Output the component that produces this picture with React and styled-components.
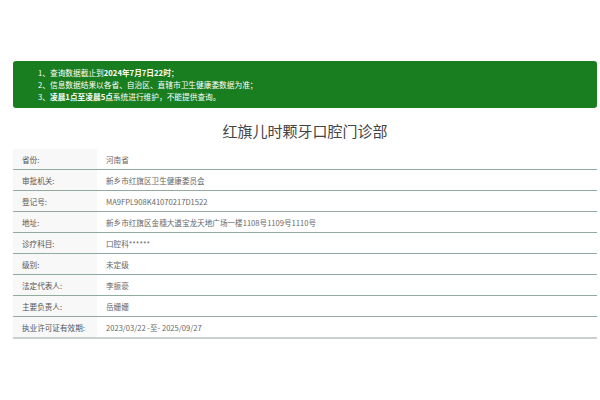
import React from "react";
import styled, { createGlobalStyle } from "styled-components";

const GlobalStyle = createGlobalStyle`
  html, body {
    margin: 0;
    padding: 0;
    background: #fff;
  }
  body {
    font-family: "Noto Sans CJK SC", "Noto Sans", sans-serif;
  }
`;

const Page = styled.div`
  width: 584px;
  padding: 61px 0 0 13px;
`;

const Notice = styled.ol`
  margin: 0;
  height: 47px;
  box-sizing: border-box;
  padding: 6px 0 0 25px;
  list-style: none;
  background: #187e1f;
  border-radius: 3px;
  color: #fff;
  font-size: 7.7px;
  line-height: 12px;
`;

const Title = styled.h2`
  margin: 13px 0 8px;
  text-align: center;
  font-size: 15px;
  line-height: 20px;
  font-weight: normal;
  color: #444;
`;

const Table = styled.div`
  display: flex;
  flex-direction: column;
  font-size: 7.6px;
`;

const Row = styled.div`
  display: grid;
  grid-template-columns: 84px 1fr;
  height: 20px;
  border-bottom: ${(p) => (p.last ? "2px solid #c9d1cd" : "1px solid #93ab9f")};
`;

const Label = styled.div`
  display: flex;
  align-items: center;
  padding-left: 9px;
  background: #f8f8f8;
  color: #555;
`;

const Value = styled.div`
  display: flex;
  align-items: center;
  padding-left: 9px;
  color: #666;
`;

const rows = [
  ["省份:", "河南省"],
  ["审批机关:", "新乡市红旗区卫生健康委员会"],
  ["登记号:", "MA9FPL908K41070217D1522"],
  ["地址:", "新乡市红旗区金穗大道宝龙天地广场一楼1108号1109号1110号"],
  ["诊疗科目:", "口腔科******"],
  ["级别:", "未定级"],
  ["法定代表人:", "李振豪"],
  ["主要负责人:", "岳姗姗"],
  ["执业许可证有效期:", "2023/03/22 -至- 2025/09/27"],
];

export default function App() {
  return (
    <Page>
      <GlobalStyle />
      <Notice>
        <li>1、查询数据截止到<b>2024年7月7日22时</b>；</li>
        <li>2、信息数据结果以各省、自治区、直辖市卫生健康委数据为准；</li>
        <li>3、<b>凌晨1点至凌晨5点</b>系统进行维护，不能提供查询。</li>
      </Notice>
      <Title>红旗儿时颗牙口腔门诊部</Title>
      <Table>
        {rows.map(([k, v], i) => (
          <Row key={k} last={i === rows.length - 1}>
            <Label>{k}</Label>
            <Value>{v}</Value>
          </Row>
        ))}
      </Table>
    </Page>
  );
}
